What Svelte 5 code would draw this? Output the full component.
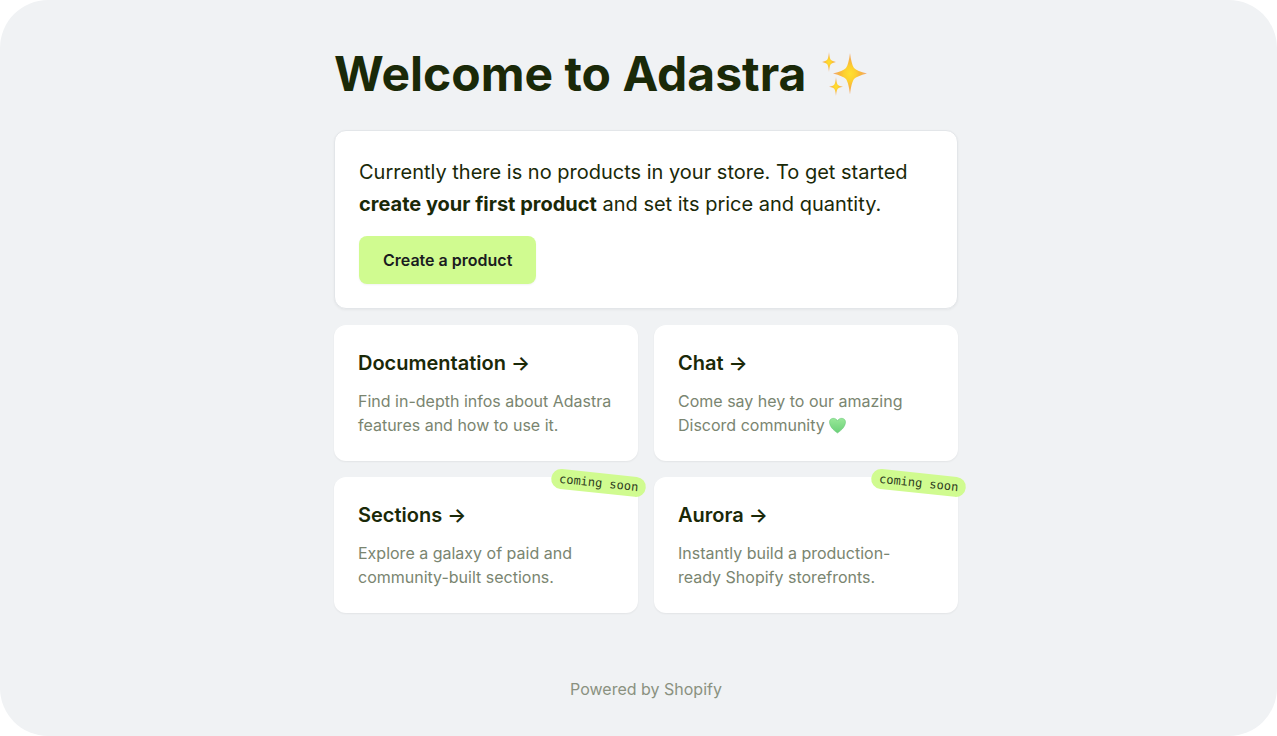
<script>
  const cards = [
    { title: 'Documentation', lines: ['Find in-depth infos about Adastra', 'features and how to use it.'] },
    { title: 'Chat', lines: ['Come say hey to our amazing', 'Discord community'], heart: true },
    { title: 'Sections', lines: ['Explore a galaxy of paid and', 'community-built sections.'], soon: true },
    { title: 'Aurora', lines: ['Instantly build a production-', 'ready Shopify storefronts.'], soon: true }
  ];
</script>

<div class="page">
  <main>
    <h1>Welcome to Adastra
      <svg class="sparkles" viewBox="0 0 48 48" aria-hidden="true">
        <defs>
          <radialGradient id="gold">
            <stop offset="0" stop-color="#ffe02f" />
            <stop offset="0.35" stop-color="#fdd02f" />
            <stop offset="0.6" stop-color="#f8b73e" />
            <stop offset="1" stop-color="#f0a878" />
          </radialGradient>
        </defs>
        <g fill="url(#gold)">
          <path d="M30 3C31 10 32 15 34 18Q37 21 47 23.500Q37 26 34 29C32 32 31 37 30 44.500C29 37 28 32 26 29Q23 26 13 23.500Q23 21 26 18C28 15 29 10 30 3Z" />
          <path d="M9 2C9.500 7 10 9 11 10Q12 11 16 12Q12 13 11 14C10 15 9.500 17 9 22C8.500 17 8 15 7 14Q6 13 2 12Q6 11 7 10C8 9 8.500 7 9 2Z" />
          <path d="M16 27C16.500 32 17 34 18 35Q19 36 23 36.700Q19 37.500 18 38.500C17 39.500 16.500 41 16 46C15.500 41 15 39.500 14 38.500Q13 37.500 9 36.700Q13 36 14 35C15 34 15.500 32 16 27Z" />
        </g>
      </svg>
    </h1>

    <section class="intro">
      <p>Currently there is no products in your store. To get started <strong>create your first product</strong> and set its price and quantity.</p>
      <button type="button">Create a product</button>
    </section>

    <div class="grid">
      {#each cards as card}
        <a class="card" href="#{card.title.toLowerCase()}">
          <h2>{card.title} →</h2>
          <p>{card.lines[0]}<br />{card.lines[1]}{#if card.heart}{' '}<svg class="heart" viewBox="0 0 18 18" aria-hidden="true">
            <defs><linearGradient id="mint" x1="0" y1="0" x2="0" y2="1"><stop offset="0" stop-color="#98e898" /><stop offset="1" stop-color="#6bd078" /></linearGradient></defs>
            <path d="M8.500 16C4 13 .500 9 .500 5C.500 .500 7 0 8.500 4C10 0 16.500 .500 16.500 5C16.500 9 13 13 8.500 16Z" fill="url(#mint)" stroke="#62c374" stroke-width="0.5" />
          </svg>{/if}</p>
          {#if card.soon}<span class="badge">coming soon</span>{/if}
        </a>
      {/each}
    </div>
  </main>
  <footer>Powered by Shopify</footer>
</div>

<style>
  :global(body) { margin: 0; background: #fff; }
  .page {
    box-sizing: border-box;
    min-height: 100vh;
    padding: 42px 16px 35px 31px;
    border-radius: 48px;
    background: #f0f2f4;
    color: #1a2908;
    font-family: Inter, sans-serif;
    display: flex;
    flex-direction: column;
    align-items: center;
  }
  main { width: 100%; max-width: 624px; }
  h1 { margin: 0 0 24px; font-size: 48px; line-height: 64px; font-weight: 700; display: flex; align-items: center; gap: 14px; }
  .sparkles { width: 48px; height: 48px; }
  .intro { padding: 24px; border: 1px solid #e3e6e9; border-radius: 12px; background: #fff; box-shadow: 0 1px 3px #0000000d; }
  .intro p { margin: 0 0 16px; font-size: 20px; line-height: 32px; }
  strong { font-weight: 700; }
  button { height: 48px; padding: 0 24px; border: 0; border-radius: 8px; background: #d0fb90; color: #1a1c1f; font: 600 16px/24px Inter, sans-serif; box-shadow: 0 1px 2px #0000000d; }
  .intro { padding-top: 25px; }
  .grid { display: grid; grid-template-columns: 1fr 1fr; gap: 16px; margin-top: 16px; }
  .card { position: relative; padding: 24px; border-radius: 12px; background: #fff; color: inherit; text-decoration: none; box-shadow: 0 1px 2px #0000000f; }
  h2 { margin: 0 0 12px; font-size: 20px; line-height: 28px; font-weight: 600; }
  .card p { margin: 0; font-size: 16px; line-height: 24px; color: #7a8570; }
  .heart { width: 18px; height: 18px; vertical-align: -4px; }
  .badge { position: absolute; top: -4px; right: -8px; padding: 0 8px; border-radius: 10px; background: #d0fb90; color: #2f3d21; font: 12px/20px "DejaVu Sans Mono", monospace; transform: rotate(6deg); }
  footer { margin-top: auto; font-size: 16px; line-height: 24px; color: #8a9180; }
</style>
